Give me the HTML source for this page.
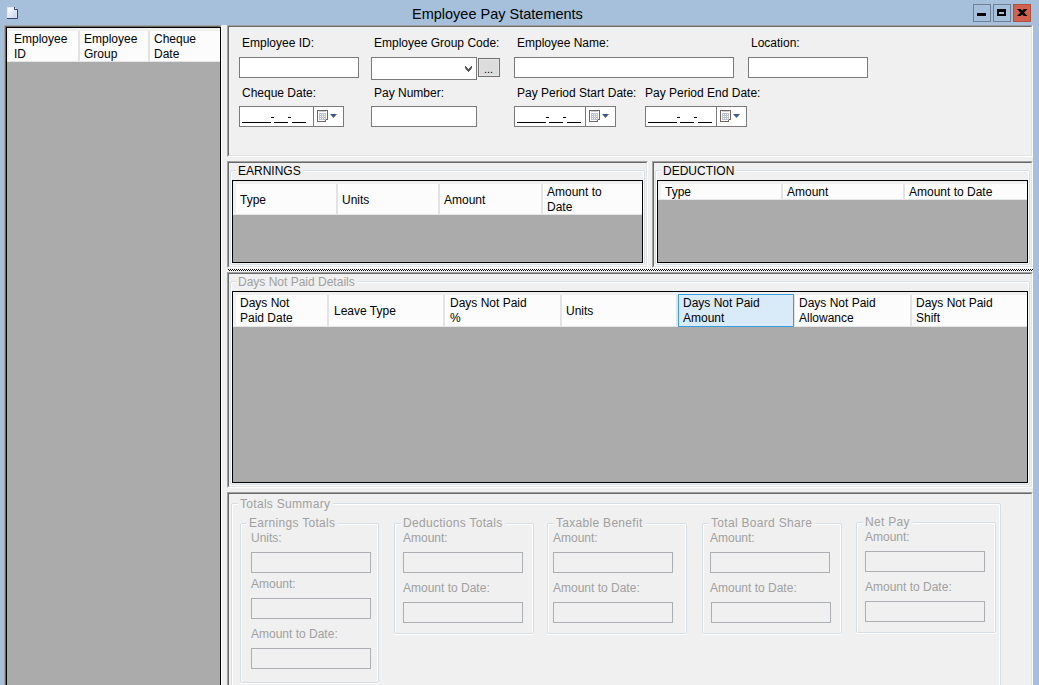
<!DOCTYPE html>
<html><head><meta charset="utf-8">
<style>
*{box-sizing:border-box;margin:0;padding:0}
html,body{width:1039px;height:685px;overflow:hidden;background:#a6c0dc;font-family:"Liberation Sans",sans-serif;font-size:12px;color:#000}
.a{position:absolute}
.t{position:absolute;white-space:nowrap;line-height:15px}
.dis{color:#a0a0a0}
.inp{position:absolute;background:#fff;border:1px solid #7a7a7a}
.dinp{position:absolute;background:#f0f0f0;border:1px solid #abafb4}
.sunk{position:absolute;border-top:1px solid #a0a0a0;border-left:1px solid #a0a0a0;border-right:1px solid #fff;border-bottom:1px solid #fff}
.sunk>.in{position:absolute;left:0;top:0;right:0;bottom:0;border-top:1px solid #696969;border-left:1px solid #696969;border-right:1px solid #e3e3e3;border-bottom:1px solid #e3e3e3;background:#f0f0f0}
.grp{position:absolute;border:1px solid #d5dfe5;border-radius:2px;box-shadow:inset 1px 1px 0 #fff,inset -1px 0 0 #fff,0 1px 0 #fff}
.gl{position:absolute;background:#f0f0f0;padding:0 2px 0 2px;line-height:15px;white-space:nowrap}
.grid{position:absolute;border:1px solid #000;background:#ababab}
.hdr{position:absolute;left:0;top:0;right:0;background:#fcfcfc;border-top:3px solid #f0f0f0;border-left:3px solid #f0f0f0;border-bottom:1px solid #e5e5e5}
.div{position:absolute;top:0;bottom:0;width:2px;background:#e3e3e3}
</style></head><body>
<!-- title bar -->
<div class="a" style="left:7px;top:7px;width:11px;height:12px">
<svg width="11" height="12" viewBox="0 0 11 12"><defs><linearGradient id="pg" x1="0" y1="0" x2="1" y2="1"><stop offset="0" stop-color="#ffffff"/><stop offset="1" stop-color="#c5d0ec"/></linearGradient></defs>
<path d="M0.5 0.5 H7.5 L10 3 V11 H0.5 Z" fill="url(#pg)" stroke="#e4e8f0" stroke-width="1"/>
<path d="M10.5 2.5 V11.5 H0" fill="none" stroke="#34476a" stroke-width="1"/>
<path d="M7.5 0 V2.5 H10.5" fill="none" stroke="#34476a" stroke-width="1"/>
</svg></div>
<div class="t" style="left:412px;top:5px;font-size:14.5px;line-height:18px;color:#000">Employee Pay Statements</div>
<!-- window buttons -->
<div class="a" style="left:973px;top:4px;width:18px;height:18px;border:1px solid #6e7f95;background:#a6c0dc"><div class="a" style="left:3px;top:8px;width:9px;height:3px;background:#000"></div></div>
<div class="a" style="left:993px;top:4px;width:18px;height:18px;border:1px solid #6e7f95;background:#a6c0dc"><div class="a" style="left:3px;top:4px;width:9px;height:7px;border:2px solid #000;border-top-width:3px;background:#a6c0dc"></div></div>
<div class="a" style="left:1013px;top:4px;width:18px;height:18px;border:1px solid #b0503c;background:#d0624f">
<svg class="a" style="left:3px;top:4px" width="11" height="8" viewBox="0 0 11 8"><path d="M0 0 H3.6 L10.4 7 H6.8 Z M6.8 0 H10.4 L3.6 7 H0 Z" fill="#000"/></svg></div>

<!-- client area -->
<div class="a" style="left:4px;top:25px;width:1029px;height:660px;background:#f0f0f0"></div>

<!-- left list -->
<div class="a" style="left:4px;top:25px;width:218px;height:670px;border-top:1px solid #a0a0a0;border-left:1px solid #a0a0a0;border-right:1px solid #fff;background:#f0f0f0">
 <div class="a" style="left:0;top:0;width:216px;height:668px;border-top:1px solid #696969;border-left:1px solid #696969;border-right:1px solid #e3e3e3"></div>
 <div class="grid" style="left:1px;top:1px;width:215px;height:700px">
  <div class="hdr" style="height:34px;border-top-width:3px;border-left-width:2px">
   <div class="div" style="left:69px"></div>
   <div class="div" style="left:139px"></div>
   <div class="t" style="left:5px;top:1px">Employee<br>ID</div>
   <div class="t" style="left:75px;top:1px">Employee<br>Group</div>
   <div class="t" style="left:145px;top:1px">Cheque<br>Date</div>
  </div>
 </div>
</div>

<!-- top form -->
<div class="sunk" style="left:227px;top:25px;width:806px;height:132px"><div class="in"></div></div>
<div class="t" style="left:242px;top:36px">Employee ID:</div>
<div class="inp" style="left:239px;top:57px;width:120px;height:21px"></div>
<div class="t" style="left:374px;top:36px">Employee Group Code:</div>
<div class="inp" style="left:371px;top:57px;width:106px;height:23px"></div>
<svg class="a" style="left:465px;top:66px" width="7" height="6" viewBox="0 0 7 6" shape-rendering="crispEdges"><g fill="#555"><rect x="0" y="0" width="1" height="1"/><rect x="6" y="0" width="1" height="1"/><rect x="0" y="1" width="1" height="1"/><rect x="1" y="1" width="1" height="1"/><rect x="5" y="1" width="1" height="1"/><rect x="6" y="1" width="1" height="1"/><rect x="1" y="2" width="1" height="1"/><rect x="2" y="2" width="1" height="1"/><rect x="4" y="2" width="1" height="1"/><rect x="5" y="2" width="1" height="1"/><rect x="1" y="3" width="1" height="1"/><rect x="2" y="3" width="1" height="1"/><rect x="3" y="3" width="1" height="1"/><rect x="4" y="3" width="1" height="1"/><rect x="5" y="3" width="1" height="1"/><rect x="2" y="4" width="1" height="1"/><rect x="3" y="4" width="1" height="1"/><rect x="4" y="4" width="1" height="1"/><rect x="3" y="5" width="1" height="1"/></g><g fill="#9a9a9a"><rect x="0" y="2" width="1" height="1"/><rect x="6" y="2" width="1" height="1"/></g></svg>
<div class="a" style="left:478px;top:58px;width:22px;height:19px;background:#dcdcdc;border:1px solid #707070;box-shadow:inset 0 0 0 1px #e6e6e6"><div class="t" style="left:5px;top:3px;font-size:11px">...</div></div>
<div class="t" style="left:517px;top:36px">Employee Name:</div>
<div class="inp" style="left:514px;top:57px;width:220px;height:21px"></div>
<div class="t" style="left:751px;top:36px">Location:</div>
<div class="inp" style="left:748px;top:57px;width:120px;height:21px"></div>

<div class="t" style="left:242px;top:86px">Cheque Date:</div>
<div class="t" style="left:374px;top:86px">Pay Number:</div>
<div class="inp" style="left:371px;top:106px;width:106px;height:21px"></div>
<div class="t" style="left:517px;top:86px">Pay Period Start Date:</div>
<div class="t" style="left:645px;top:86px">Pay Period End Date:</div>

<div class="inp" style="left:239px;top:106px;width:105px;height:21px"><div class="a" style="left:73px;top:0;width:1px;height:19px;background:#7a7a7a"></div><div class="a" style="left:2px;top:15px;width:29px;height:1px;background:#000"></div><div class="a" style="left:31px;top:10px;width:3px;height:1px;background:#000"></div><div class="a" style="left:34px;top:15px;width:14px;height:1px;background:#000"></div><div class="a" style="left:48px;top:10px;width:3px;height:1px;background:#000"></div><div class="a" style="left:52px;top:15px;width:14px;height:1px;background:#000"></div><svg class="a" style="left:77px;top:3px" width="22" height="13" viewBox="0 0 22 13" shape-rendering="crispEdges">
<path d="M0.5 0.5 H10.5 V9.5 H8.5 V11.5 H0.5 Z" fill="#fff" stroke="#72635e" stroke-width="1"/>
<rect x="2" y="1" width="7" height="1" fill="#c9cfda"/>
<rect x="2" y="3" width="7" height="7" fill="#bcc2cd"/>
<g fill="#fff"><rect x="3" y="4" width="1" height="1"/><rect x="5" y="4" width="1" height="1"/><rect x="7" y="4" width="1" height="1"/><rect x="3" y="6" width="1" height="1"/><rect x="5" y="6" width="1" height="1"/><rect x="7" y="6" width="1" height="1"/><rect x="3" y="8" width="1" height="1"/><rect x="5" y="8" width="1" height="1"/><rect x="7" y="8" width="1" height="1"/></g>
<path d="M13 4 H20 L16.5 8 Z" fill="#3f5b8a" shape-rendering="auto"/>
</svg></div><div class="inp" style="left:514px;top:106px;width:102px;height:21px"><div class="a" style="left:70px;top:0;width:1px;height:19px;background:#7a7a7a"></div><div class="a" style="left:2px;top:15px;width:29px;height:1px;background:#000"></div><div class="a" style="left:31px;top:10px;width:3px;height:1px;background:#000"></div><div class="a" style="left:34px;top:15px;width:14px;height:1px;background:#000"></div><div class="a" style="left:48px;top:10px;width:3px;height:1px;background:#000"></div><div class="a" style="left:52px;top:15px;width:14px;height:1px;background:#000"></div><svg class="a" style="left:74px;top:3px" width="22" height="13" viewBox="0 0 22 13" shape-rendering="crispEdges">
<path d="M0.5 0.5 H10.5 V9.5 H8.5 V11.5 H0.5 Z" fill="#fff" stroke="#72635e" stroke-width="1"/>
<rect x="2" y="1" width="7" height="1" fill="#c9cfda"/>
<rect x="2" y="3" width="7" height="7" fill="#bcc2cd"/>
<g fill="#fff"><rect x="3" y="4" width="1" height="1"/><rect x="5" y="4" width="1" height="1"/><rect x="7" y="4" width="1" height="1"/><rect x="3" y="6" width="1" height="1"/><rect x="5" y="6" width="1" height="1"/><rect x="7" y="6" width="1" height="1"/><rect x="3" y="8" width="1" height="1"/><rect x="5" y="8" width="1" height="1"/><rect x="7" y="8" width="1" height="1"/></g>
<path d="M13 4 H20 L16.5 8 Z" fill="#3f5b8a" shape-rendering="auto"/>
</svg></div><div class="inp" style="left:645px;top:106px;width:102px;height:21px"><div class="a" style="left:70px;top:0;width:1px;height:19px;background:#7a7a7a"></div><div class="a" style="left:2px;top:15px;width:29px;height:1px;background:#000"></div><div class="a" style="left:31px;top:10px;width:3px;height:1px;background:#000"></div><div class="a" style="left:34px;top:15px;width:14px;height:1px;background:#000"></div><div class="a" style="left:48px;top:10px;width:3px;height:1px;background:#000"></div><div class="a" style="left:52px;top:15px;width:14px;height:1px;background:#000"></div><svg class="a" style="left:74px;top:3px" width="22" height="13" viewBox="0 0 22 13" shape-rendering="crispEdges">
<path d="M0.5 0.5 H10.5 V9.5 H8.5 V11.5 H0.5 Z" fill="#fff" stroke="#72635e" stroke-width="1"/>
<rect x="2" y="1" width="7" height="1" fill="#c9cfda"/>
<rect x="2" y="3" width="7" height="7" fill="#bcc2cd"/>
<g fill="#fff"><rect x="3" y="4" width="1" height="1"/><rect x="5" y="4" width="1" height="1"/><rect x="7" y="4" width="1" height="1"/><rect x="3" y="6" width="1" height="1"/><rect x="5" y="6" width="1" height="1"/><rect x="7" y="6" width="1" height="1"/><rect x="3" y="8" width="1" height="1"/><rect x="5" y="8" width="1" height="1"/><rect x="7" y="8" width="1" height="1"/></g>
<path d="M13 4 H20 L16.5 8 Z" fill="#3f5b8a" shape-rendering="auto"/>
</svg></div>

<!-- earnings -->
<div class="sunk" style="left:227px;top:161px;width:421px;height:107px"><div class="in"></div></div>
<div class="grp" style="left:230px;top:170px;width:415px;height:95px"></div>
<div class="gl" style="left:236px;top:164px">EARNINGS</div>
<div class="grid" style="left:232px;top:180px;width:411px;height:83px">
 <div class="hdr" style="height:34px">
  <div class="div" style="left:100px"></div>
  <div class="div" style="left:202px"></div>
  <div class="div" style="left:305px"></div>
  <div class="t" style="left:4px;top:9px">Type</div>
  <div class="t" style="left:106px;top:9px">Units</div>
  <div class="t" style="left:208px;top:9px">Amount</div>
  <div class="t" style="left:311px;top:1px">Amount to<br>Date</div>
 </div>
</div>

<!-- deduction -->
<div class="sunk" style="left:652px;top:161px;width:381px;height:107px"><div class="in"></div></div>
<div class="grp" style="left:655px;top:170px;width:375px;height:95px"></div>
<div class="gl" style="left:661px;top:164px">DEDUCTION</div>
<div class="grid" style="left:657px;top:180px;width:371px;height:83px">
 <div class="hdr" style="height:19px">
  <div class="div" style="left:120px"></div>
  <div class="div" style="left:242px"></div>
  <div class="t" style="left:4px;top:1px">Type</div>
  <div class="t" style="left:126px;top:1px">Amount</div>
  <div class="t" style="left:248px;top:1px">Amount to Date</div>
 </div>
</div>

<!-- splitter -->
<svg class="a" style="left:228px;top:269px" width="805" height="2"><defs><pattern id="chk" width="2" height="2" patternUnits="userSpaceOnUse"><rect x="0" y="0" width="1" height="1" fill="#000"/><rect x="1" y="0" width="1" height="1" fill="#fff"/><rect x="0" y="1" width="1" height="1" fill="#fff"/><rect x="1" y="1" width="1" height="1" fill="#000"/></pattern></defs><rect width="805" height="2" fill="url(#chk)"/></svg>

<!-- days not paid -->
<div class="sunk" style="left:227px;top:272px;width:806px;height:216px"><div class="in"></div></div>
<div class="grp" style="left:230px;top:281px;width:800px;height:204px"></div>
<div class="gl dis" style="left:236px;top:275px">Days Not Paid Details</div>
<div class="grid" style="left:232px;top:291px;width:796px;height:192px">
 <div class="hdr" style="height:35px">
  <div class="div" style="left:91px"></div>
  <div class="div" style="left:207px"></div>
  <div class="div" style="left:324px"></div>
  <div class="div" style="left:440px"></div>
  <div class="div" style="left:557px"></div>
  <div class="div" style="left:674px"></div>
  <div class="a" style="left:442px;top:-1px;width:116px;height:33px;background:#d9ebf9;border:1px solid #3c9ddb"></div>
  <div class="t" style="left:4px;top:1px">Days Not<br>Paid Date</div>
  <div class="t" style="left:98px;top:9px">Leave Type</div>
  <div class="t" style="left:214px;top:1px">Days Not Paid<br>%</div>
  <div class="t" style="left:330px;top:9px">Units</div>
  <div class="t" style="left:447px;top:1px">Days Not Paid<br>Amount</div>
  <div class="t" style="left:563px;top:1px">Days Not Paid<br>Allowance</div>
  <div class="t" style="left:680px;top:1px">Days Not Paid<br>Shift</div>
 </div>
</div>

<!-- totals summary -->
<div class="sunk" style="left:227px;top:492px;width:806px;height:200px"><div class="in"></div></div>
<div class="grp" style="left:231px;top:503px;width:770px;height:190px"></div>
<div class="gl dis" style="left:238px;top:497px;letter-spacing:0.3px;padding-right:3px">Totals Summary</div>
<div class="grp" style="left:240px;top:523px;width:139px;height:160px"></div><div class="gl dis" style="left:247px;top:516px;letter-spacing:0.3px;padding-right:3px">Earnings Totals</div><div class="t dis" style="left:251px;top:531px">Units:</div><div class="dinp" style="left:251px;top:552px;width:120px;height:21px"></div><div class="t dis" style="left:251px;top:577px">Amount:</div><div class="dinp" style="left:251px;top:598px;width:120px;height:21px"></div><div class="t dis" style="left:251px;top:627px">Amount to Date:</div><div class="dinp" style="left:251px;top:648px;width:120px;height:21px"></div><div class="grp" style="left:394px;top:523px;width:140px;height:111px"></div><div class="gl dis" style="left:401px;top:516px;letter-spacing:0.3px;padding-right:3px">Deductions Totals</div><div class="t dis" style="left:403px;top:531px">Amount:</div><div class="dinp" style="left:403px;top:552px;width:120px;height:21px"></div><div class="t dis" style="left:403px;top:581px">Amount to Date:</div><div class="dinp" style="left:403px;top:602px;width:120px;height:21px"></div><div class="grp" style="left:547px;top:523px;width:140px;height:111px"></div><div class="gl dis" style="left:554px;top:516px;letter-spacing:0.3px;padding-right:3px">Taxable Benefit</div><div class="t dis" style="left:553px;top:531px">Amount:</div><div class="dinp" style="left:553px;top:552px;width:120px;height:21px"></div><div class="t dis" style="left:553px;top:581px">Amount to Date:</div><div class="dinp" style="left:553px;top:602px;width:120px;height:21px"></div><div class="grp" style="left:702px;top:523px;width:140px;height:111px"></div><div class="gl dis" style="left:709px;top:516px;letter-spacing:0.3px;padding-right:3px">Total Board Share</div><div class="t dis" style="left:710px;top:531px">Amount:</div><div class="dinp" style="left:710px;top:552px;width:120px;height:21px"></div><div class="t dis" style="left:710px;top:581px">Amount to Date:</div><div class="dinp" style="left:711px;top:602px;width:120px;height:21px"></div><div class="grp" style="left:856px;top:522px;width:140px;height:111px"></div><div class="gl dis" style="left:863px;top:515px;letter-spacing:0.3px;padding-right:3px">Net Pay</div><div class="t dis" style="left:865px;top:530px">Amount:</div><div class="dinp" style="left:865px;top:551px;width:120px;height:21px"></div><div class="t dis" style="left:865px;top:580px">Amount to Date:</div><div class="dinp" style="left:865px;top:601px;width:120px;height:21px"></div>

</body></html>
